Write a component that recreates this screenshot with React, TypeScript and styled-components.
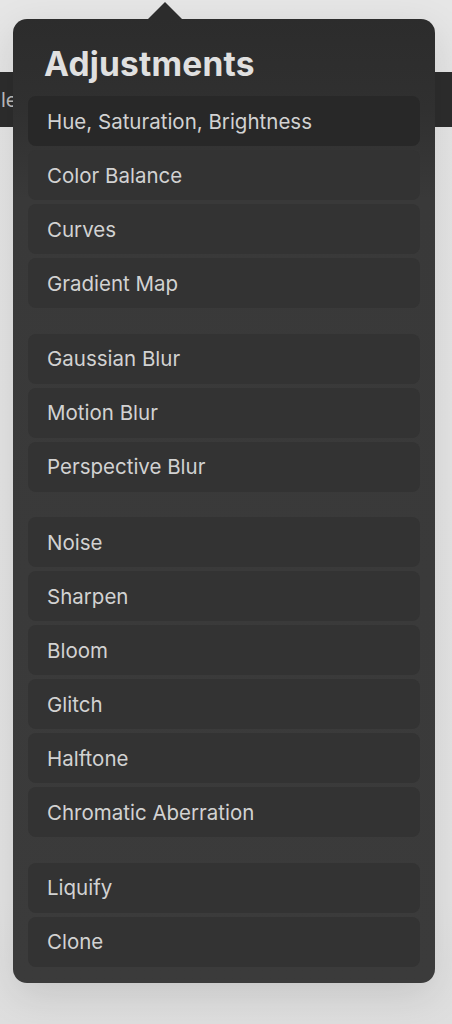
import React from 'react';
import styled, { createGlobalStyle } from 'styled-components';

const groups: string[][] = [
  ['Hue, Saturation, Brightness', 'Color Balance', 'Curves', 'Gradient Map'],
  ['Gaussian Blur', 'Motion Blur', 'Perspective Blur'],
  ['Noise', 'Sharpen', 'Bloom', 'Glitch', 'Halftone', 'Chromatic Aberration'],
  ['Liquify', 'Clone'],
];

export default function App() {
  return (
    <Page>
      <GlobalStyle />
      <BackBar>
        <BackLabel>le</BackLabel>
      </BackBar>
      <Popover>
        <Arrow />
        <Title>Adjustments</Title>
        <Groups>
          {groups.map((group, gi) => (
            <Group key={gi}>
              {group.map((label, i) => (
                <Item key={label} $dim={gi === 0 && i === 0}>
                  {label}
                </Item>
              ))}
            </Group>
          ))}
        </Groups>
      </Popover>
    </Page>
  );
}

const GlobalStyle = createGlobalStyle`
  html, body {
    margin: 0;
    padding: 0;
    background: #e5e5e5;
  }
  body {
    font-family: Inter, "Liberation Sans", sans-serif;
    -webkit-font-smoothing: antialiased;
  }
`;

const Page = styled.div`
  position: relative;
  width: 452px;
  height: 1024px;
  overflow: hidden;
  background: linear-gradient(#e6e6e6 0, #e4e4e4 900px, #dedede 1024px);
  padding-top: 72px;
  box-sizing: border-box;
`;

const BackBar = styled.div`
  height: 55px;
  background: #2d2d2d;
  display: flex;
  align-items: center;
`;

const BackLabel = styled.span`
  font-size: 20px;
  color: #bdbdbd;
  margin-left: 1px;
`;

const Popover = styled.div`
  position: absolute;
  top: 19px;
  left: 13px;
  width: 422px;
  box-sizing: border-box;
  padding: 0 15px 16px;
  border-radius: 14px;
  background: linear-gradient(#2c2c2c 0, #303030 90px, #393939 180px, #3b3b3b 100%);
  box-shadow: 0 12px 40px rgba(0, 0, 0, 0.12);
`;

const Arrow = styled.div`
  position: absolute;
  top: -17px;
  left: 135px;
  width: 0;
  height: 0;
  border-left: 17px solid transparent;
  border-right: 17px solid transparent;
  border-bottom: 17px solid #2c2c2c;
`;

const Title = styled.h1`
  margin: 0;
  padding: 26px 0 0 16px;
  height: 51px;
  box-sizing: border-box;
  font-size: 33.5px;
  line-height: 38px;
  font-weight: 700;
  color: #e0e0e0;
  letter-spacing: 0.2px;
`;

const Groups = styled.div`
  display: flex;
  flex-direction: column;
  gap: 25.5px;
  margin-top: 26px;
`;

const Group = styled.div`
  display: flex;
  flex-direction: column;
  gap: 4px;
`;

const Item = styled.div<{ $dim?: boolean }>`
  height: 50px;
  display: flex;
  align-items: center;
  padding-left: 19px;
  border-radius: 8px;
  background: ${(p) => (p.$dim ? '#282828' : '#333333')};
  color: #d2d2d2;
  font-size: 20.5px;
`;
